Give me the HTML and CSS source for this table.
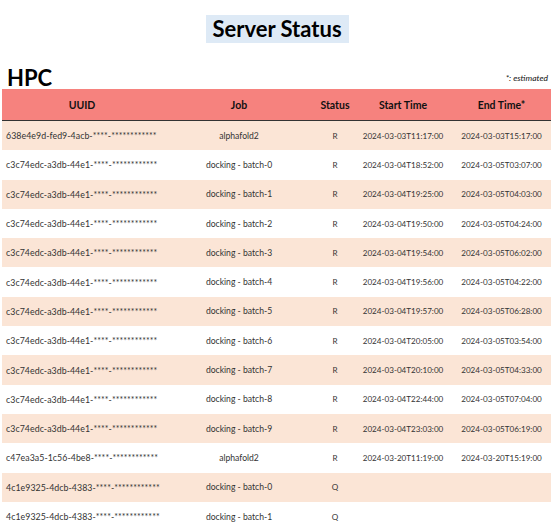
FILE: index.html
```html
<!DOCTYPE html>
<html>
<head>
<meta charset="utf-8">
<link rel="stylesheet" href="styles.css">
</head>
<body>
<div class="title-wrap"><h1 class="title">Server Status</h1></div>
<div class="section-head">
  <h2 class="section">HPC</h2>
  <span class="note">*: estimated</span>
</div>
<table class="jobs">
  <thead>
    <tr><th class="c-uuid">UUID</th><th class="c-job">Job</th><th class="c-status">Status</th><th class="c-start">Start Time</th><th class="c-end">End Time*</th></tr>
  </thead>
  <tbody>
    <tr><td class="uuid">638e4e9d-fed9-4acb-****-************</td><td class="job">alphafold2</td><td>R</td><td>2024-03-03T11:17:00</td><td>2024-03-03T15:17:00</td></tr>
    <tr><td class="uuid">c3c74edc-a3db-44e1-****-************</td><td class="job">docking - batch-0</td><td>R</td><td>2024-03-04T18:52:00</td><td>2024-03-05T03:07:00</td></tr>
    <tr><td class="uuid">c3c74edc-a3db-44e1-****-************</td><td class="job">docking - batch-1</td><td>R</td><td>2024-03-04T19:25:00</td><td>2024-03-05T04:03:00</td></tr>
    <tr><td class="uuid">c3c74edc-a3db-44e1-****-************</td><td class="job">docking - batch-2</td><td>R</td><td>2024-03-04T19:50:00</td><td>2024-03-05T04:24:00</td></tr>
    <tr><td class="uuid">c3c74edc-a3db-44e1-****-************</td><td class="job">docking - batch-3</td><td>R</td><td>2024-03-04T19:54:00</td><td>2024-03-05T06:02:00</td></tr>
    <tr><td class="uuid">c3c74edc-a3db-44e1-****-************</td><td class="job">docking - batch-4</td><td>R</td><td>2024-03-04T19:56:00</td><td>2024-03-05T04:22:00</td></tr>
    <tr><td class="uuid">c3c74edc-a3db-44e1-****-************</td><td class="job">docking - batch-5</td><td>R</td><td>2024-03-04T19:57:00</td><td>2024-03-05T06:28:00</td></tr>
    <tr><td class="uuid">c3c74edc-a3db-44e1-****-************</td><td class="job">docking - batch-6</td><td>R</td><td>2024-03-04T20:05:00</td><td>2024-03-05T03:54:00</td></tr>
    <tr><td class="uuid">c3c74edc-a3db-44e1-****-************</td><td class="job">docking - batch-7</td><td>R</td><td>2024-03-04T20:10:00</td><td>2024-03-05T04:33:00</td></tr>
    <tr><td class="uuid">c3c74edc-a3db-44e1-****-************</td><td class="job">docking - batch-8</td><td>R</td><td>2024-03-04T22:44:00</td><td>2024-03-05T07:04:00</td></tr>
    <tr><td class="uuid">c3c74edc-a3db-44e1-****-************</td><td class="job">docking - batch-9</td><td>R</td><td>2024-03-04T23:03:00</td><td>2024-03-05T06:19:00</td></tr>
    <tr><td class="uuid">c47ea3a5-1c56-4be8-****-************</td><td class="job">alphafold2</td><td>R</td><td>2024-03-20T11:19:00</td><td>2024-03-20T15:19:00</td></tr>
    <tr><td class="uuid">4c1e9325-4dcb-4383-****-************</td><td class="job">docking - batch-0</td><td>Q</td><td></td><td></td></tr>
    <tr><td class="uuid">4c1e9325-4dcb-4383-****-************</td><td class="job">docking - batch-1</td><td>Q</td><td></td><td></td></tr>
  </tbody>
</table>
</body>
</html>
```

FILE: styles.css
```css
html, body {
  margin: 0;
  padding: 0;
  background: #ffffff;
}
body {
  font-family: Lato, "Open Sans", sans-serif;
  color: #222;
}
.title-wrap {
  display: flex;
  justify-content: center;
  padding-top: 15px;
}
.title {
  margin: 0;
  background: #deeaf6;
  font-size: 22px;
  font-weight: 700;
  line-height: 28px;
  height: 28px;
  width: 143px;
  text-align: center;
  color: #000;
}
.section-head {
  display: flex;
  justify-content: space-between;
  align-items: flex-end;
  margin-top: 20px;
  padding: 0 6px 0 7px;
  height: 26px;
}
.section {
  margin: 0;
  font-size: 22px;
  font-weight: 700;
  line-height: 26px;
  position: relative;
  top: 2px;
  color: #000;
}
.note {
  font-size: 8.5px;
  font-style: italic;
  color: #111;
  margin-bottom: 6px;
}
.jobs {
  margin: 0 0 0 2px;
  width: 549px;
  border-collapse: collapse;
  table-layout: fixed;
}
.jobs th {
  background: #f6827e;
  height: 31px;
  font-size: 10.5px;
  font-weight: 700;
  color: #111;
  border-bottom: 1.5px solid #333;
  padding: 0;
  text-align: center;
}
.c-uuid { width: 160px; }
.c-job { width: 154px; }
.c-status { width: 38px; }
.c-start { width: 98px; }
.c-end { width: 99px; }
.jobs td {
  height: 29.3px;
  padding: 0;
  font-size: 8.1px;
  color: #333;
  text-align: center;
  white-space: nowrap;
}
.jobs td.uuid {
  text-align: left;
  padding-left: 4px;
  font-size: 8.8px;
  letter-spacing: 0.05px;
}
.jobs td.job {
  font-size: 8.6px;
}
.jobs tbody tr:nth-child(odd) td {
  background: #fbe5d6;
}
```
